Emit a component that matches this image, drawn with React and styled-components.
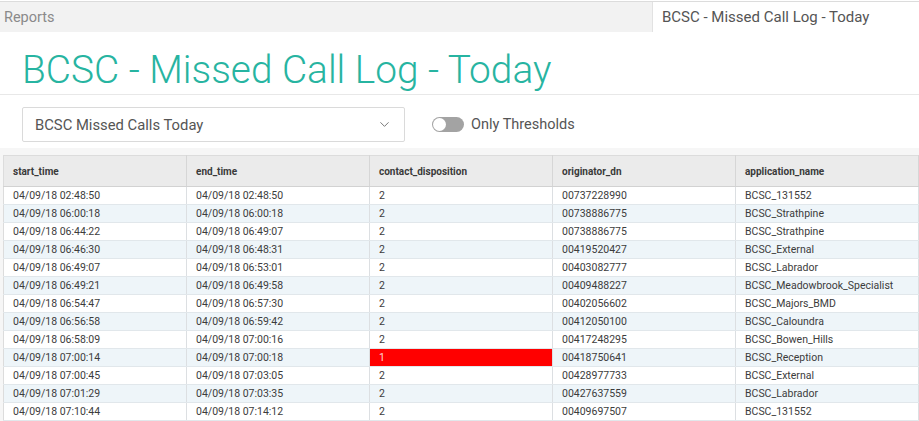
import React from "react";
import styled, {createGlobalStyle} from "styled-components";
import {ChevronDown} from "lucide-react";

const GlobalStyle = createGlobalStyle`
  html, body {
    margin: 0;
    padding: 0;
    background: #ffffff;
    font-family: Roboto, "Liberation Sans", Arial, sans-serif;
    color: #333;
  }
`;

const TabBar = styled.div`
  display: flex;
  height: 30px;
  margin-top: 1px;
  border-top: 1px solid #dcdcdc;
  background: #f2f2f2;
`;
const Tab = styled.div`
  display: flex;
  align-items: center;
  padding: 0 ${(p) => (p.active ? "9px" : "4px")};
  font-size: ${(p) => (p.active ? "15px" : "14.5px")};
  color: ${(p) => (p.active ? "#555" : "#8a8a8a")};
  background: ${(p) => (p.active ? "#fff" : "transparent")};
  border-left: ${(p) => (p.active ? "1px solid #e2e2e2" : "none")};
  flex: ${(p) => (p.active ? "0 0 248px" : "1")};
`;
const TitleBar = styled.div`
  box-sizing: border-box;
  height: 63px;
  display: flex;
  align-items: center;
  padding: 12px 0 0 22px;
  border-bottom: 1px solid #e8e8e8;
`;
const Title = styled.h1`
  margin: 0;
  font-size: 38.8px;
  font-weight: 300;
  color: #27b4a1;
`;
const FilterRow = styled.div`
  box-sizing: border-box;
  display: flex;
  align-items: flex-start;
  gap: 27px;
  height: 53px;
  padding: 12px 22px 0;
  background: #fff;
`;
const Select = styled.div`
  box-sizing: border-box;
  width: 383px;
  height: 35px;
  display: flex;
  align-items: center;
  justify-content: space-between;
  padding: 0 12px;
  border: 1px solid #dadada;
  border-radius: 2px;
  font-size: 14.8px;
  color: #555;
`;
const ToggleWrap = styled.label`
  display: flex;
  align-items: center;
  gap: 7px;
  height: 35px;
  font-size: 14.5px;
  color: #555;
`;
const Track = styled.span`
  position: relative;
  width: 32px;
  height: 15px;
  border-radius: 8px;
  background: #a3a3a3;
`;
const Knob = styled.span`
  position: absolute;
  left: 1px;
  top: 1px;
  width: 13px;
  height: 13px;
  border-radius: 50%;
  background: #fff;
`;
const TableArea = styled.div`
  background: #f6f6f6;
  padding: 7px 0 0 3px;
  overflow: hidden;
`;
const Table = styled.table`
  border-collapse: collapse;
  table-layout: fixed;
  width: 915px;
  font-size: 10.5px;
  background: #fff;
  border-left: 1px solid #dcdcdc;
  border-top: 1px solid #dcdcdc;
`;
const Col = styled.col`
  width: 183px;
`;
const Th = styled.th`
  height: 30px;
  padding: 0 0 0 9px;
  text-align: left;
  font-weight: 700;
  font-size: 10px;
  color: #3a3a3a;
  background: #ebebeb;
  border-right: 1px solid #d6d6d6;
  border-bottom: 1px solid #d2d2d2;
`;
const Tr = styled.tr`
  background: ${(p) => (p.striped ? "#eef5f9" : "#fff")};
`;
const Td = styled.td`
  height: 17px;
  padding: 0 0 0 9px;
  white-space: nowrap;
  overflow: hidden;
  border-right: 1px solid #dcdfe2;
  border-bottom: 1px solid #e1e7eb;
  background: ${(p) => (p.alert ? "#ff0000" : "transparent")};
  color: ${(p) => (p.alert ? "#ffd6d6" : "#3c3c3c")};
`;

const columns = ["start_time", "end_time", "contact_disposition", "originator_dn", "application_name"];

const rows = [
  ["04/09/18 02:48:50", "04/09/18 02:48:50", "2", "00737228990", "BCSC_131552"],
  ["04/09/18 06:00:18", "04/09/18 06:00:18", "2", "00738886775", "BCSC_Strathpine"],
  ["04/09/18 06:44:22", "04/09/18 06:49:07", "2", "00738886775", "BCSC_Strathpine"],
  ["04/09/18 06:46:30", "04/09/18 06:48:31", "2", "00419520427", "BCSC_External"],
  ["04/09/18 06:49:07", "04/09/18 06:53:01", "2", "00403082777", "BCSC_Labrador"],
  ["04/09/18 06:49:21", "04/09/18 06:49:58", "2", "00409488227", "BCSC_Meadowbrook_Specialist"],
  ["04/09/18 06:54:47", "04/09/18 06:57:30", "2", "00402056602", "BCSC_Majors_BMD"],
  ["04/09/18 06:56:58", "04/09/18 06:59:42", "2", "00412050100", "BCSC_Caloundra"],
  ["04/09/18 06:58:09", "04/09/18 07:00:16", "2", "00417248295", "BCSC_Bowen_Hills"],
  ["04/09/18 07:00:14", "04/09/18 07:00:18", "1", "00418750641", "BCSC_Reception"],
  ["04/09/18 07:00:45", "04/09/18 07:03:05", "2", "00428977733", "BCSC_External"],
  ["04/09/18 07:01:29", "04/09/18 07:03:35", "2", "00427637559", "BCSC_Labrador"],
  ["04/09/18 07:10:44", "04/09/18 07:14:12", "2", "00409697507", "BCSC_131552"],
];

export default function App() {
  return (
    <>
      <GlobalStyle/>
      <TabBar>
        <Tab>Reports</Tab>
        <Tab active>BCSC - Missed Call Log - Today</Tab>
      </TabBar>
      <TitleBar>
        <Title>BCSC - Missed Call Log - Today</Title>
      </TitleBar>
      <FilterRow>
        <Select>
          <span>BCSC Missed Calls Today</span>
          <ChevronDown size={15} strokeWidth={1.6} color="#777"/>
        </Select>
        <ToggleWrap>
          <Track><Knob/></Track>
          Only Thresholds
        </ToggleWrap>
      </FilterRow>
      <TableArea>
        <Table>
          <colgroup>
            {columns.map((c) => <Col key={c}/>)}
          </colgroup>
          <thead>
            <tr>
              {columns.map((c) => <Th key={c}>{c}</Th>)}
            </tr>
          </thead>
          <tbody>
            {rows.map((r, i) => (
              <Tr key={i} striped={i % 2 === 1}>
                {r.map((v, j) => (
                  <Td key={j} alert={j === 2 && v === "1"}>{v}</Td>
                ))}
              </Tr>
            ))}
          </tbody>
        </Table>
      </TableArea>
    </>
  );
}
